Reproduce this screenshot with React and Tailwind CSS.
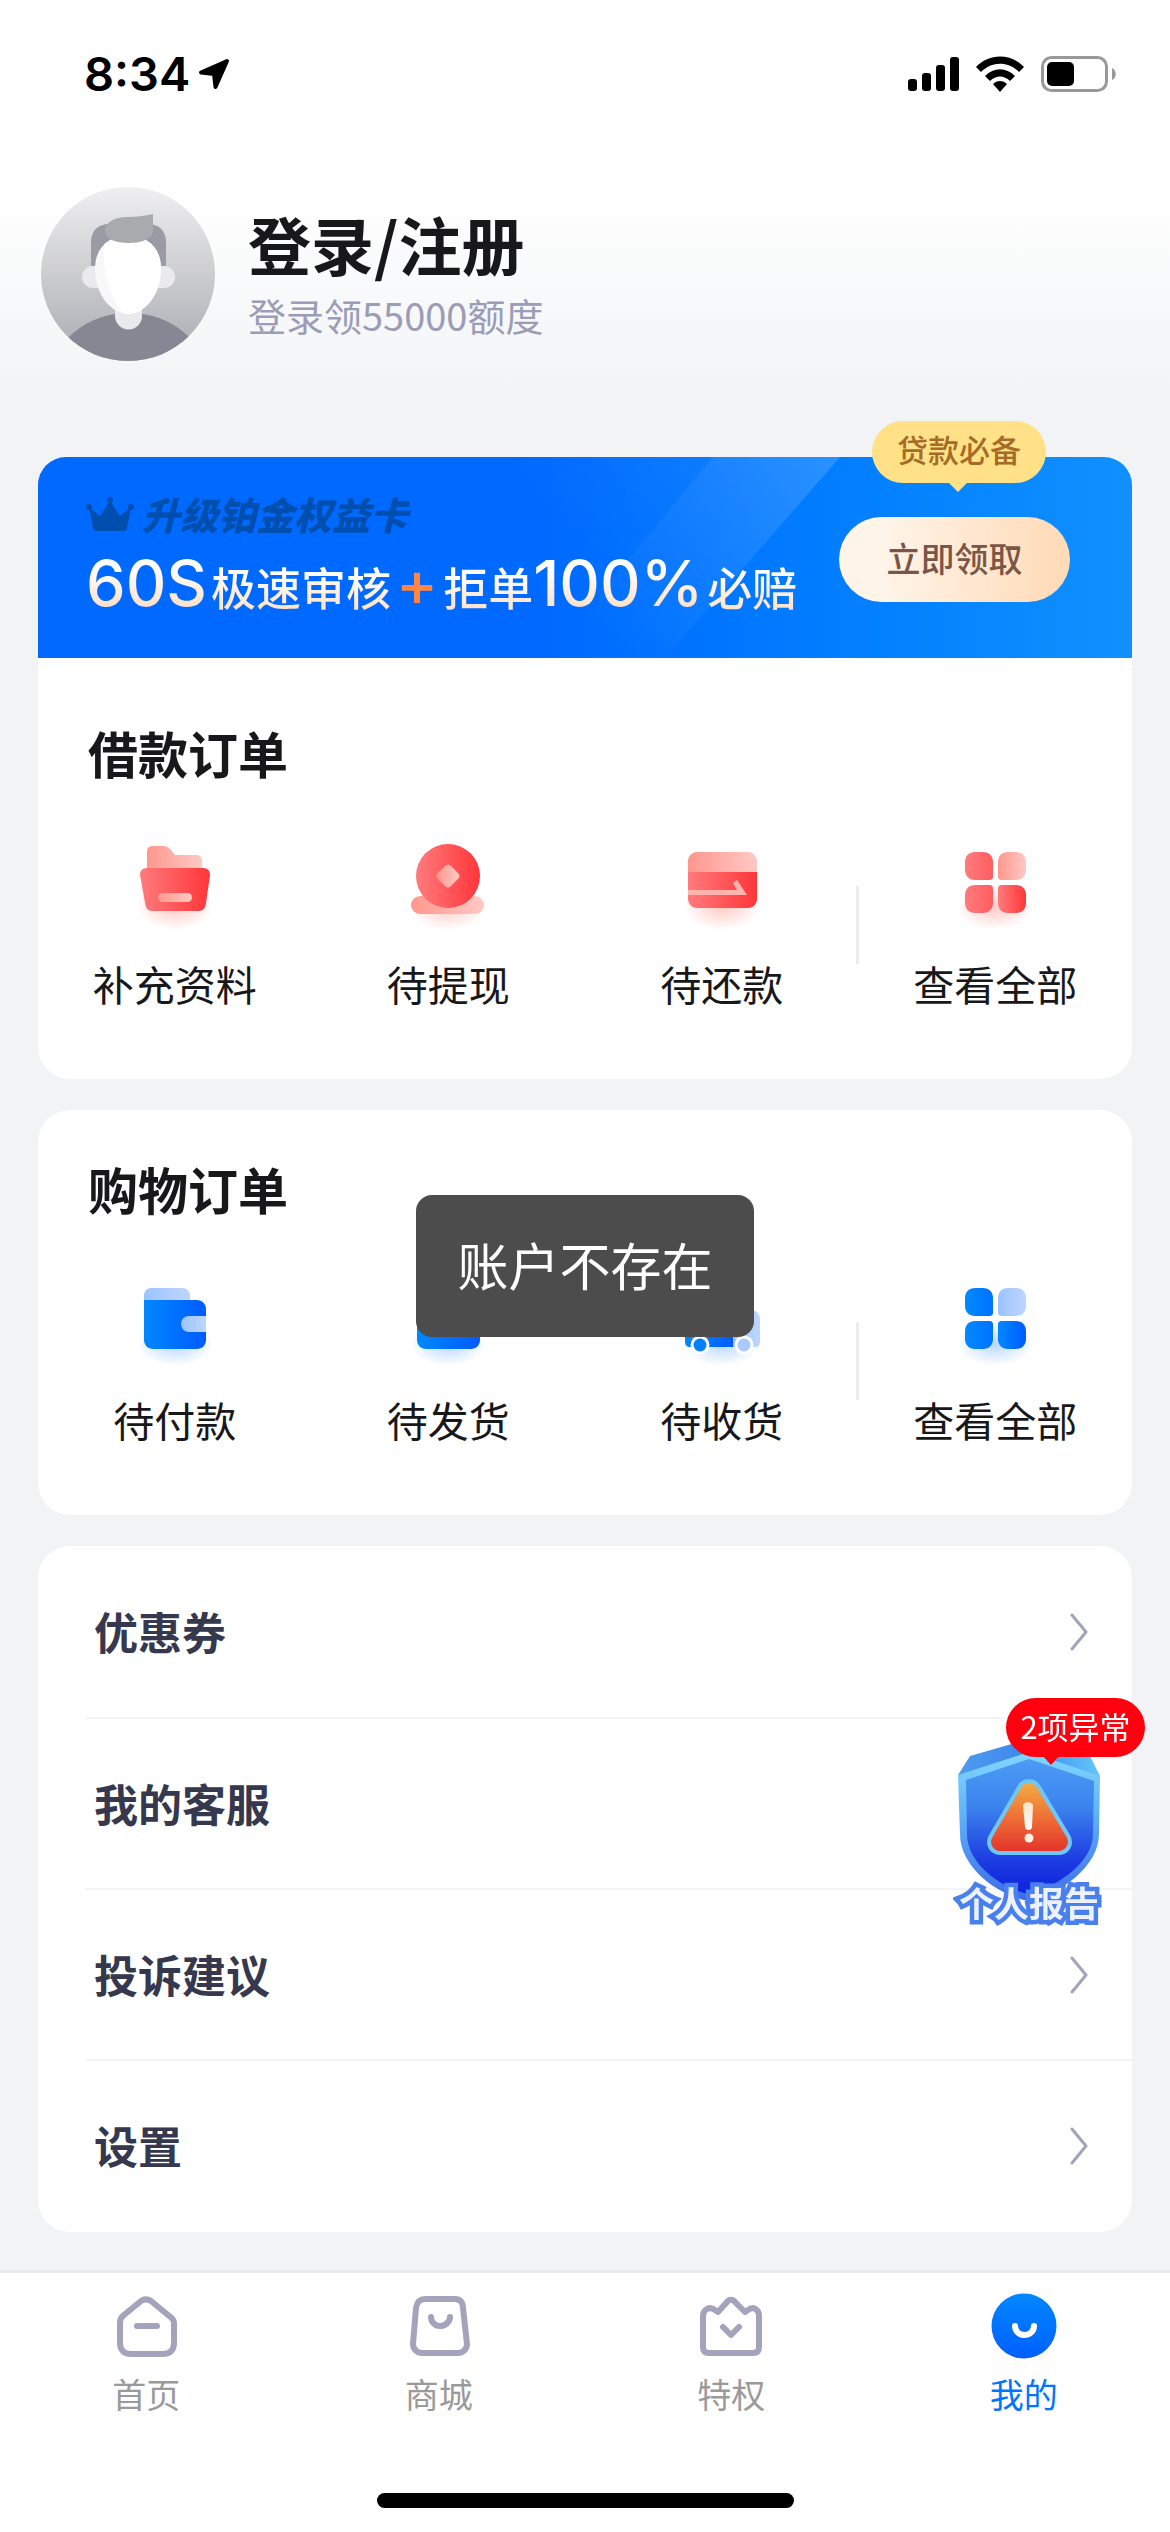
import { useState } from 'react';

// Gradients shared by all icons on the page
function GradientDefs() {
  return (
    <svg className="absolute h-0 w-0" aria-hidden="true">
      <defs>
        <linearGradient id="red-dark" x1="0" x2="1">
          <stop offset="0" stopColor="#ff7b7d" />
          <stop offset="1" stopColor="#ff3639" />
        </linearGradient>
        <linearGradient id="red-mid" x1="0" x2="1">
          <stop offset="0" stopColor="#ff7b7d" />
          <stop offset="1" stopColor="#ff5d60" />
        </linearGradient>
        <linearGradient id="red-light" x1="0" x2="1">
          <stop offset="0" stopColor="#ff978d" />
          <stop offset="1" stopColor="#ffc9c5" />
        </linearGradient>
        <linearGradient id="blue-dark" x1="0" x2="1">
          <stop offset="0" stopColor="#0088ff" />
          <stop offset="1" stopColor="#005bff" />
        </linearGradient>
        <linearGradient id="blue-mid" x1="0" x2="1">
          <stop offset="0" stopColor="#008aff" />
          <stop offset="1" stopColor="#0072ff" />
        </linearGradient>
        <linearGradient id="blue-light" x1="0" x2="1">
          <stop offset="0" stopColor="#9cc3ff" />
          <stop offset="1" stopColor="#bdd6ff" />
        </linearGradient>
        <radialGradient id="glow-red">
          <stop offset="0" stopColor="#ff6b5e" stopOpacity="0.34" />
          <stop offset="1" stopColor="#ff6b5e" stopOpacity="0" />
        </radialGradient>
        <radialGradient id="glow-blue">
          <stop offset="0" stopColor="#2f8bff" stopOpacity="0.34" />
          <stop offset="1" stopColor="#2f8bff" stopOpacity="0" />
        </radialGradient>
      </defs>
    </svg>
  );
}

function IconBox({ tone, children }) {
  return (
    <svg viewBox="0 0 80 100" className="h-[100px] w-[80px]" aria-hidden="true">
      <ellipse cx="40" cy="76" rx="38" ry="22" fill={tone === 'red' ? 'url(#glow-red)' : 'url(#glow-blue)'} />
      {children}
    </svg>
  );
}

const FolderIcon = () => (
  <IconBox tone="red">
    <path d="M12 40V20c0-4 2-6 6-6h10c3 0 5 1 7 3l5 6h21c4 0 6 2 6 6v11z" fill="url(#red-light)" />
    <path d="M12 36h56c5 0 7 3 7 7l-4 28c-1 6-3 8-8 8H18c-5 0-7-2-8-8L5 43c0-4 2-7 7-7z" fill="url(#red-dark)" />
    <rect x="23" y="61" width="34" height="9" rx="4.5" fill="url(#red-light)" />
  </IconBox>
);

const CoinIcon = () => (
  <IconBox tone="red">
    <rect x="3" y="64" width="73" height="18" rx="9" fill="url(#red-light)" />
    <circle cx="40" cy="44" r="32" fill="url(#red-dark)" />
    <path d="M37 34c2-2 4-2 6 0l7 7c2 2 2 4 0 6l-7 7c-2 2-4 2-6 0l-7-7c-2-2-2-4 0-6z" fill="url(#red-light)" />
  </IconBox>
);

const RepayIcon = () => (
  <IconBox tone="red">
    <path d="M6 40V29c0-5 4-9 9-9h51c5 0 9 4 9 9v11z" fill="url(#red-light)" />
    <path d="M6 40h69v27c0 5-4 9-9 9H15c-5 0-9-4-9-9z" fill="url(#red-dark)" />
    <path d="M6 58h49l-4-7 4-3 10 15H6z" fill="#ffb3ae" />
  </IconBox>
);

const WalletIcon = () => (
  <IconBox tone="blue">
    <path d="M9 34v-6c0-5 3-8 8-8h30c5 0 8 3 8 8v6z" fill="url(#blue-light)" />
    <path d="M9 32h53c5 0 9 4 9 9v31c0 5-4 9-9 9H18c-5 0-9-4-9-9z" fill="url(#blue-dark)" />
    <path d="M71 48H54a8 8 0 0 0 0 16h17z" fill="url(#blue-light)" />
  </IconBox>
);

const PackageIcon = () => (
  <IconBox tone="blue">
    <path d="M9 38l8-14c1-2 3-4 6-4h34c3 0 5 2 6 4l9 14z" fill="url(#blue-light)" />
    <path d="M9 36h63v36c0 5-4 9-9 9H18c-5 0-9-4-9-9z" fill="url(#blue-dark)" />
  </IconBox>
);

const TruckIcon = () => (
  <IconBox tone="blue">
    <path d="M51 42h18c5 0 9 4 9 9v23c0 3-2 5-5 5H51z" fill="url(#blue-light)" />
    <path d="M3 36c0-5 4-8 8-8h40v51H8c-3 0-5-2-5-5z" fill="url(#blue-dark)" />
    <circle cx="18" cy="77" r="9.5" fill="#fff" />
    <circle cx="62" cy="77" r="9.5" fill="#fff" />
    <circle cx="18" cy="77" r="6.5" fill="#0080ff" />
    <circle cx="62" cy="77" r="6.5" fill="#a9caff" />
  </IconBox>
);

function GridIcon({ tone }) {
  const red = tone === 'red';
  const mid = red ? 'url(#red-mid)' : 'url(#blue-mid)';
  return (
    <IconBox tone={tone}>
      <path d="M20 20h8c6 0 10 4 10 10v14c0 3-1 4-4 4H20c-6 0-10-4-10-10v-8c0-6 4-10 10-10z" fill={mid} />
      <path d="M53 20h8c6 0 10 4 10 10v8c0 6-4 10-10 10H47c-3 0-4-1-4-4V30c0-6 4-10 10-10z" fill={red ? 'url(#red-light)' : 'url(#blue-light)'} />
      <path d="M20 53h14c3 0 4 1 4 4v14c0 6-4 10-10 10h-8c-6 0-10-4-10-10v-8c0-6 4-10 10-10z" fill={mid} />
      <path d="M47 53h14c6 0 10 4 10 10v8c0 6-4 10-10 10h-8c-6 0-10-4-10-10V57c0-3 1-4 4-4z" fill={red ? 'url(#red-dark)' : 'url(#blue-dark)'} />
    </IconBox>
  );
}

const loanOrders = [
  { label: '补充资料', icon: <FolderIcon /> },
  { label: '待提现', icon: <CoinIcon /> },
  { label: '待还款', icon: <RepayIcon /> },
];

const shopOrders = [
  { label: '待付款', icon: <WalletIcon /> },
  { label: '待发货', icon: <PackageIcon /> },
  { label: '待收货', icon: <TruckIcon /> },
];

const menuItems = ['优惠券', '我的客服', '投诉建议', '设置'];

const lineProps = { fill: 'none', stroke: '#a3a3bb', strokeWidth: 6, strokeLinecap: 'round', strokeLinejoin: 'round' };

const tabs = [
  {
    id: 'home',
    label: '首页',
    icon: (
      <g {...lineProps}>
        <path d="M10 33c0-4 1-6 4-8l17-14c3-2 7-2 10 0l17 14c3 2 6 4 6 8v20c0 7-4 11-11 11H21c-7 0-11-4-11-11z" />
        <path d="M27 36h20" />
      </g>
    ),
  },
  {
    id: 'mall',
    label: '商城',
    icon: (
      <g {...lineProps}>
        <path d="M22 9h30c5 0 8 3 8 9l4 36c0 5-4 9-9 9H19c-5 0-9-4-9-9l3-36c1-6 4-9 9-9z" />
        <path d="M28 27c0 5 4 9 9 9s10-4 10-9" />
      </g>
    ),
  },
  {
    id: 'perks',
    label: '特权',
    icon: (
      <g {...lineProps}>
        <path d="M8 26c0-7 7-10 12-6l3 2 9-10c2-3 6-3 8 0l10 10 3-2c5-4 11-1 11 6v31c0 4-2 6-6 6H14c-4 0-6-2-6-6z" />
        <path d="M28 37l8 8 8-8" />
      </g>
    ),
  },
  {
    id: 'mine',
    label: '我的',
    icon: (
      <g>
        <linearGradient id="mine-bg" x1="0" y1="0" x2="0" y2="1">
          <stop offset="0" stopColor="#0088ff" />
          <stop offset="1" stopColor="#005fff" />
        </linearGradient>
        <circle cx="36" cy="36" r="32.5" fill="url(#mine-bg)" />
        <path d="M27 36c0 5 4 9 9.500 9s9.500-4 9.500-9" fill="none" stroke="#fff" strokeWidth="6" strokeLinecap="round" />
      </g>
    ),
  },
];

function StatusBar() {
  return (
    <div className="flex h-[148px] items-center justify-between pl-[84px] pr-[54px] text-black">
      <div className="flex items-center gap-[8px]">
        <span className="font-['Inter',sans-serif] text-[47px] font-semibold leading-[56px]">8:34</span>
        <svg viewBox="0 0 32 32" className="h-[32px] w-[32px]" aria-hidden="true">
          <path d="M29 3L3 14.500L16 16L17.500 29z" fill="#000" stroke="#000" strokeWidth="4" strokeLinejoin="round" />
        </svg>
      </div>
      <div className="flex items-center gap-[17px]">
        <svg viewBox="0 0 51 36" className="h-[36px] w-[51px]" aria-hidden="true">
          <rect x="0" y="23" width="9" height="12" rx="3" />
          <rect x="14" y="17" width="9" height="18" rx="3" />
          <rect x="28" y="9" width="9" height="26" rx="3" />
          <rect x="42" y="1" width="9" height="34" rx="3" />
        </svg>
        <svg viewBox="0 0 48 36" className="h-[36px] w-[48px]" aria-hidden="true">
          <path d="M0 11C13-3 35-3 48 11l-5 5C32 5 16 5 5 16z" />
          <path d="M9 20c9-9 21-9 30 0l-5 5c-6-6-14-6-20 0z" />
          <path d="M17 28c4-4 10-4 14 0l-7 8z" />
        </svg>
        <svg viewBox="0 0 75 36" className="h-[36px] w-[75px]" aria-hidden="true">
          <rect x="1.500" y="1.500" width="64" height="33" rx="9" fill="none" stroke="#999" strokeWidth="3" />
          <rect x="6" y="6" width="27" height="24" rx="5" />
          <path d="M71 12c5 2 5 10 0 12z" fill="#999" />
        </svg>
      </div>
    </div>
  );
}

function Avatar() {
  return (
    <svg viewBox="0 0 174 174" className="h-[174px] w-[174px] shrink-0" aria-hidden="true">
      <defs>
        <linearGradient id="avatar-bg" x1="0" y1="0" x2="0" y2="1">
          <stop offset="0" stopColor="#efeff2" />
          <stop offset="1" stopColor="#a9aab0" />
        </linearGradient>
        <clipPath id="avatar-clip">
          <circle cx="87" cy="87" r="87" />
        </clipPath>
        <clipPath id="face-clip">
          <path d="M54 82c0-22 14-33 33-33s33 11 33 33c0 25-16 45-33 45S54 107 54 82z" />
        </clipPath>
      </defs>
      <g clipPath="url(#avatar-clip)">
        <rect width="174" height="174" fill="url(#avatar-bg)" />
        <ellipse cx="88" cy="193" rx="78" ry="67" fill="#868793" />
        <path d="M50 79V55c0-12 8-18 18-18h39c10 0 18 6 18 18v24z" fill="#999ba5" />
        <rect x="41" y="79" width="93" height="22" rx="11" fill="#e9e9ee" />
        <path d="M74 110h27v19a13 13 0 0 1-27 0z" fill="#e9e9ee" />
        <g clipPath="url(#face-clip)">
          <rect x="54" y="40" width="70" height="90" fill="#f8f8fa" />
          <path d="M64 40h60v87H83C66 107 60 78 64 40z" fill="#fff" />
        </g>
        <path d="M64 44c0-9 10-14 22-14 9 0 18-1 26-3v19c-4 7-13 10-24 10-14 0-24-4-24-12z" fill="#a9aaae" />
      </g>
    </svg>
  );
}

function Banner() {
  const creamText = 'bg-linear-to-b from-white from-30% to-[#ffdcc0] to-90% bg-clip-text text-transparent';
  return (
    <div className="relative flex h-[201px] items-start justify-between rounded-t-[28px] bg-linear-to-r from-[#0069ff] from-45% to-[#1190ff] pl-[48px] pr-[62px]">
      {/* Light beams */}
      <svg viewBox="0 0 360 201" className="absolute left-[442px] top-0 h-[201px] w-[360px]" aria-hidden="true">
        <defs>
          <linearGradient id="beam" gradientUnits="userSpaceOnUse" x1="340" y1="0" x2="150" y2="200">
            <stop offset="0" stopColor="#fff" stopOpacity="0.15" />
            <stop offset="1" stopColor="#fff" stopOpacity="0" />
          </linearGradient>
          <linearGradient id="beam-soft" gradientUnits="userSpaceOnUse" x1="233" y1="0" x2="120" y2="110">
            <stop offset="0" stopColor="#fff" stopOpacity="0.050" />
            <stop offset="1" stopColor="#fff" stopOpacity="0" />
          </linearGradient>
        </defs>
        <path d="M233 0H360L185 201H67z" fill="url(#beam)" />
        <path d="M0 0H233L67 201H0z" fill="url(#beam-soft)" />
      </svg>

      <div className="relative pt-[35px]">
        <div className="flex items-center gap-[8px] text-[#004fae]">
          <svg viewBox="0 0 48 36" className="h-[36px] w-[48px]" aria-hidden="true">
            <g fill="currentColor">
              <path d="M3 11l11 9L24 5l10 15 11-9-4 21c0 2-1 3-4 3H11c-3 0-4-1-4-3z" />
              <circle cx="24" cy="4" r="3" />
              <circle cx="3" cy="11" r="3" />
              <circle cx="45" cy="11" r="3" />
            </g>
          </svg>
          <span className="text-[38px] font-black italic leading-[44px]">升级铂金权益卡</span>
        </div>
        <div className="mt-[9px] flex items-baseline whitespace-nowrap leading-[76px]">
          <span className={`font-['Inter',sans-serif] text-[63px] font-medium ${creamText}`}>60S</span>
          <span className={`ml-[4px] text-[45px] font-medium ${creamText}`}>极速审核</span>
          <span className="mx-[5px] font-['Inter',sans-serif] text-[63px] font-medium text-[#ff8642]">+</span>
          <span className={`text-[45px] font-medium ${creamText}`}>拒单</span>
          <span className={`font-['Inter',sans-serif] text-[63px] font-medium ${creamText}`}>100%</span>
          <span className={`ml-[4px] text-[45px] font-medium ${creamText}`}>必赔</span>
        </div>
      </div>

      <button type="button" className="relative mt-[60px] h-[85px] w-[231px] shrink-0 rounded-full bg-linear-to-r from-[#fff4e8] from-20% to-[#ffdab6] pb-[4px] text-[34px] font-medium text-[#7b5646]">
        立即领取
      </button>

      <div className="absolute -top-[36px] right-[86px] flex h-[62px] w-[174px] items-center justify-center rounded-full bg-[#ffe187] pb-[5px] text-[31px] font-medium text-[#a66b28]">
        贷款必备
        <svg viewBox="0 0 20 10" className="absolute left-[76px] top-[61px] h-[10px] w-[20px]" aria-hidden="true">
          <path d="M0 0h20L10 10z" fill="#ffe187" />
        </svg>
      </div>
    </div>
  );
}

function OrderItem({ label, icon }) {
  return (
    <button type="button" className="flex flex-1 flex-col items-center">
      {icon}
      <span className="mt-[27px] text-[41px] leading-[48px]">{label}</span>
    </button>
  );
}

function OrderSection({ title, items, tone }) {
  return (
    <div className="pb-[72px]">
      <h2 className="pl-[50px] text-[50px] font-bold leading-[56px]">{title}</h2>
      <div className="mt-[52px] flex items-start">
        {items.map(item => <OrderItem key={item.label} {...item} />)}
        <span className="-ml-[3px] mt-[54px] h-[78px] w-[3px] bg-[#ebecee]" />
        <OrderItem label="查看全部" icon={<GridIcon tone={tone} />} />
      </div>
    </div>
  );
}

function Menu() {
  return (
    <ul className="mt-[31px] rounded-[32px] bg-white pb-[2px]">
      {menuItems.map((name, i) => (
        <li key={name} className="pl-[47px]">
          <a href="#" className={`flex h-[171px] items-center justify-between pl-[9px] pr-[44px] ${i > 0 ? 'border-t-2 border-[#f3f4f6]' : ''}`}>
            <span className="pb-[2px] text-[44px] font-bold text-[#36384e]">{name}</span>
            <svg viewBox="0 0 18 38" className="h-[38px] w-[18px]" aria-hidden="true">
              <path d="M2 2l14 17L2 36" fill="none" stroke="#a3a3bb" strokeWidth="3" strokeLinecap="round" strokeLinejoin="round" />
            </svg>
          </a>
        </li>
      ))}
    </ul>
  );
}

function ReportWidget() {
  return (
    <button type="button" className="fixed bottom-[605px] right-[25px] flex h-[229px] w-[188px] items-start">
      <svg viewBox="0 0 144 204" className="h-[204px] w-[144px]" aria-hidden="true">
        <defs>
          <linearGradient id="shield-back" x1="0" x2="1">
            <stop offset="0" stopColor="#4f9bf0" />
            <stop offset="0.500" stopColor="#3c86ea" />
            <stop offset="1" stopColor="#62c8fa" />
          </linearGradient>
          <linearGradient id="shield-rim" x1="0" y1="0" x2="0" y2="1">
            <stop offset="0" stopColor="#82d6ff" />
            <stop offset="0.400" stopColor="#62b4fa" />
            <stop offset="1" stopColor="#3a6be8" />
          </linearGradient>
          <linearGradient id="shield-body" x1="0" y1="0" x2="0" y2="1">
            <stop offset="0" stopColor="#4c9bf4" />
            <stop offset="0.350" stopColor="#3c84ee" />
            <stop offset="0.750" stopColor="#1c3ce2" />
            <stop offset="1" stopColor="#0e22dc" />
          </linearGradient>
          <linearGradient id="warn" gradientUnits="userSpaceOnUse" x1="0" y1="85" x2="0" y2="153">
            <stop offset="0" stopColor="#f2ab40" />
            <stop offset="0.500" stopColor="#ef7037" />
            <stop offset="1" stopColor="#e3352a" />
          </linearGradient>
          <linearGradient id="mark" x1="0" y1="0" x2="0" y2="1">
            <stop offset="0" stopColor="#ffe3c4" />
            <stop offset="1" stopColor="#fff" />
          </linearGradient>
        </defs>
        <path d="M1 77l12-19 59-17 61 17 10 20-71 10z" fill="url(#shield-back)" />
        <path d="M1 77l71-23 71 24-1 58c0 32-38 60-71 67C38 196 3 168 3 136z" fill="url(#shield-rim)" />
        <path d="M9 82l63-21 65 22-1 53c0 27-33 52-65 60C39 188 10 163 10 136z" fill="url(#shield-body)" />
        <path d="M72 94L43 144H102z" fill="#6fc6f8" stroke="#6fc6f8" strokeWidth="26" strokeLinejoin="round" />
        <path d="M72 94L43 144H102z" fill="url(#warn)" stroke="url(#warn)" strokeWidth="18" strokeLinejoin="round" />
        <path d="M66 108c0-5 10-5 10 0l-1 21c0 4-7 4-7 0z" fill="url(#mark)" />
        <circle cx="72" cy="140" r="4.500" fill="#fff0e2" />
      </svg>
      <span className="absolute bottom-[3px] left-0 w-[144px] whitespace-nowrap text-center text-[35px] font-bold leading-[44px] text-[#ebf1ff] [-webkit-text-stroke:9px_#4a80ee] [paint-order:stroke_fill]">
        个人报告
      </span>
      <span className="absolute right-0 top-0 flex h-[59px] w-[139px] items-center justify-center rounded-full bg-[#ff000f] pb-[3px] text-[31px] text-white">
        2项异常
        <svg viewBox="0 0 16 9" className="absolute left-[37px] top-[58px] h-[9px] w-[16px]" aria-hidden="true">
          <path d="M0 0h16L8 9z" fill="#ff000f" />
        </svg>
      </span>
    </button>
  );
}

function TabBar({ active, onChange }) {
  return (
    <nav className="mt-auto border-t-3 border-[#e9eaec] bg-white pb-[24px] pt-[17px]">
      <div className="flex">
        {tabs.map(tab => (
          <button key={tab.id} type="button" onClick={() => onChange(tab.id)} className="flex flex-1 flex-col items-center">
            <svg viewBox="0 0 72 72" className="h-[72px] w-[72px]" aria-hidden="true">{tab.icon}</svg>
            <span className={`mt-[12px] text-[34px] leading-[40px] ${active === tab.id ? 'text-[#0076ff]' : 'text-[#9a9a9a]'}`}>
              {tab.label}
            </span>
          </button>
        ))}
      </div>
      <div className="mx-auto mt-[79px] h-[15px] w-[417px] rounded-full bg-black" />
    </nav>
  );
}

export default function App() {
  const [activeTab, setActiveTab] = useState('mine');

  return (
    <div className="flex min-h-screen flex-col bg-[#f1f3f5] font-['Noto_Sans_CJK_SC','Noto_Sans',sans-serif] text-[#18181a]">
      <GradientDefs />

      {/* ── Header ── */}
      <header className="bg-linear-to-b from-white from-45% to-[#f1f3f5] pb-[50px]">
        <StatusBar />
        <button type="button" className="ml-[41px] mt-[39px] flex items-center gap-[33px] text-left">
          <Avatar />
          <span className="flex flex-col pb-[8px]">
            <span className="text-[63px] font-bold leading-[90px]">登录/注册</span>
            <span className="text-[38px] leading-[54px] text-[#9b9cb6]">登录领55000额度</span>
          </span>
        </button>
      </header>

      <main className="px-[38px] pb-[38px] pt-[46px]">
        {/* ── Loan orders ── */}
        <section className="rounded-[32px] bg-white">
          <Banner />
          <div className="pt-[66px]">
            <OrderSection title="借款订单" items={loanOrders} tone="red" />
          </div>
        </section>

        {/* ── Shopping orders ── */}
        <section className="mt-[31px] rounded-[32px] bg-white pt-[50px]">
          <OrderSection title="购物订单" items={shopOrders} tone="blue" />
        </section>

        <Menu />
      </main>

      <TabBar active={activeTab} onChange={setActiveTab} />
      <ReportWidget />

      {/* Toast */}
      <div className="pointer-events-none fixed inset-0 flex items-center justify-center">
        <div role="status" className="rounded-[16px] bg-[#4c4c4c] px-[41px] pb-[41px] pt-[37px] text-[51px] leading-[64px] text-white">
          账户不存在
        </div>
      </div>
    </div>
  );
}
